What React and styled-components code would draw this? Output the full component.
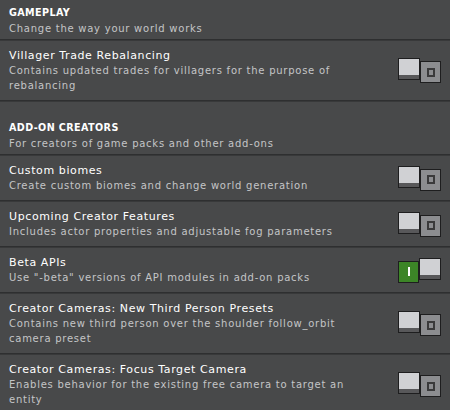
import styled, { createGlobalStyle } from 'styled-components';

const GlobalStyle = createGlobalStyle`
  html, body {
    margin: 0;
    padding: 0;
    background: #48494a;
  }
  body {
    font-family: 'DejaVu Sans', 'Liberation Sans', sans-serif;
    overflow: hidden;
  }
`;

const Page = styled.div`
  width: 450px;
  background: #48494a;
`;

const Section = styled.section`
  display: flex;
  flex-direction: column;
  padding-top: ${props => (props.first ? '0' : '13px')};
`;

const SectionHeader = styled.div`
  display: flex;
  flex-direction: column;
  padding: 5px 9px 3px;
`;

const Heading = styled.h2`
  margin: 0;
  font-size: 9.6px;
  line-height: 16px;
  font-weight: 700;
  letter-spacing: 0.4px;
  color: #ffffff;
  text-transform: uppercase;
`;

const Desc = styled.p`
  margin: 0;
  font-size: 10px;
  line-height: 15px;
  letter-spacing: 0.75px;
  color: #c4c5c7;
  white-space: nowrap;
`;

const Divider = styled.div`
  height: 2px;
  background: #38393a;
  border-top: 1px solid #2e2f30;
  box-sizing: border-box;
`;

const Row = styled.div`
  display: flex;
  align-items: center;
  justify-content: space-between;
  gap: 16px;
  padding: 7px 9px;
`;

const RowText = styled.div`
  display: flex;
  flex-direction: column;
  flex: 1;
  min-width: 0;
`;

const Title = styled.div`
  font-size: 11px;
  line-height: 15px;
  letter-spacing: 0.6px;
  color: #ffffff;
  white-space: nowrap;
`;

const ToggleBox = styled.div`
  display: flex;
  align-items: flex-start;
  height: 25px;
  flex-shrink: 0;
`;

const Knob = styled.div`
  width: 22px;
  height: 22px;
  box-sizing: border-box;
  border: 1px solid #1e1e1f;
  background: #d0d1d4;
  box-shadow: inset 0 -4px 0 #58585a;
`;

const Track = styled.div`
  width: 21px;
  height: 22px;
  margin-top: 3px;
  box-sizing: border-box;
  border: 1px solid #1e1e1f;
  background: ${props => (props.on ? '#3c8527' : '#8c8d90')};
  display: flex;
  align-items: center;
  justify-content: center;
`;

const OffMark = styled.span`
  width: 4px;
  height: 5px;
  border: 2px solid #3a3a3b;
`;

const OnMark = styled.span`
  width: 2px;
  height: 9px;
  background: #ffffff;
`;

const Toggle = ({ on }) =>
  on ? (
    <ToggleBox>
      <Track on>
        <OnMark />
      </Track>
      <Knob />
    </ToggleBox>
  ) : (
    <ToggleBox>
      <Knob />
      <Track>
        <OffMark />
      </Track>
    </ToggleBox>
  );

const sections = [
  {
    title: 'Gameplay',
    desc: 'Change the way your world works',
    items: [
      {
        title: 'Villager Trade Rebalancing',
        desc: ['Contains updated trades for villagers for the purpose of', 'rebalancing'],
        on: false
      }
    ]
  },
  {
    title: 'Add-On Creators',
    desc: 'For creators of game packs and other add-ons',
    items: [
      {
        title: 'Custom biomes',
        desc: ['Create custom biomes and change world generation'],
        on: false
      },
      {
        title: 'Upcoming Creator Features',
        desc: ['Includes actor properties and adjustable fog parameters'],
        on: false
      },
      {
        title: 'Beta APIs',
        desc: ['Use "-beta" versions of API modules in add-on packs'],
        on: true
      },
      {
        title: 'Creator Cameras: New Third Person Presets',
        desc: ['Contains new third person over the shoulder follow_orbit', 'camera preset'],
        on: false
      },
      {
        title: 'Creator Cameras: Focus Target Camera',
        desc: ['Enables behavior for the existing free camera to target an', 'entity'],
        on: false
      }
    ]
  }
];

export default function App() {
  return (
    <Page>
      <GlobalStyle />
      {sections.map((section, si) => (
        <Section key={section.title} first={si === 0}>
          <SectionHeader>
            <Heading>{section.title}</Heading>
            <Desc>{section.desc}</Desc>
          </SectionHeader>
          <Divider />
          {section.items.map(item => (
            <div key={item.title}>
              <Row>
                <RowText>
                  <Title>{item.title}</Title>
                  {item.desc.map(line => (
                    <Desc key={line}>{line}</Desc>
                  ))}
                </RowText>
                <Toggle on={item.on} />
              </Row>
              <Divider />
            </div>
          ))}
        </Section>
      ))}
    </Page>
  );
}
